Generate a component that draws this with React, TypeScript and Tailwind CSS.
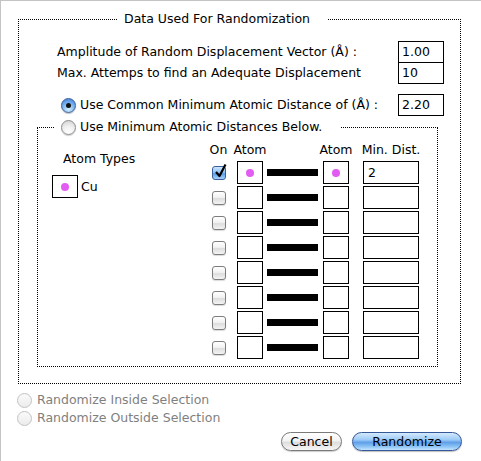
import * as React from "react"

function Radio({ checked, disabled }: { checked?: boolean; disabled?: boolean }) {
    if (checked) {
        return (
            <span className="flex h-[15px] w-[15px] shrink-0 items-center justify-center rounded-full border border-[#3b5f98] bg-[radial-gradient(circle_at_50%_80%,#d6efff_0%,#79b4f0_50%,#3a78d4_100%)] shadow-[0_1px_1px_rgba(0,0,0,0.25)]">
                <span className="h-[5px] w-[5px] rounded-full bg-[#111]" />
            </span>
        )
    }
    if (disabled) {
        return (
            <span className="h-[15px] w-[15px] shrink-0 rounded-full border border-[#c2c2c2] bg-linear-to-b from-[#fafafa] to-[#ececec]" />
        )
    }
    return (
        <span className="h-[15px] w-[15px] shrink-0 rounded-full border border-[#8c8c8c] bg-[radial-gradient(circle_at_50%_85%,#ffffff_0%,#f0f0f0_45%,#cfcfcf_100%)] shadow-[0_1px_1px_rgba(0,0,0,0.2)]" />
    )
}

function Checkbox({ checked }: { checked?: boolean }) {
    if (checked) {
        return (
            <span className="relative block h-[14px] w-[14px] rounded-[3px] border border-[#3b5f98] bg-[linear-gradient(to_bottom,#cfe6fd_0%,#86bdf2_50%,#5a9be6_55%,#a6d2fa_100%)]">
                <svg className="absolute -top-[4px] left-[1px]" width="13" height="16" viewBox="0 0 13 16">
                    <path d="M2 9 L5.5 13 L11.5 1.5" fill="none" stroke="#000" strokeWidth="2.2" strokeLinejoin="round" />
                </svg>
            </span>
        )
    }
    return (
        <span className="block h-[14px] w-[14px] rounded-[3px] border border-[#7d7d7d] bg-[linear-gradient(to_bottom,#ffffff_0%,#f2f2f2_45%,#dddddd_55%,#f4f4f4_100%)] shadow-[0_1px_1px_rgba(0,0,0,0.15)]" />
    )
}

function Dot() {
    return <span className="h-[8px] w-[8px] rounded-full bg-[#e25cf1]" />
}

const rows = [0, 1, 2, 3, 4, 5, 6, 7]

export default function App() {
    return (
        <div className="h-[461px] w-[481px] overflow-hidden border-l border-t border-[#c4c4c4] bg-white font-['DejaVu_Sans',sans-serif] text-[12.5px] leading-[16px] text-black">
            {/* Data box */}
            <fieldset className="ml-[17px] mt-[10px] w-[443px] border border-dotted border-black">
                <legend className="ml-[99px] pl-[6px] pr-[18px] leading-[16px]">Data Used For Randomization</legend>
                <div className="pb-[16px] pl-[18px] pr-[16px] pt-[14px]">
                    <div className="ml-[20px] flex h-[22px] items-center">
                        <span className="flex-1">Amplitude of Random Displacement Vector (Å) :</span>
                        <div className="h-[22px] w-[46px] border border-black px-[3px] leading-[20px]">1.00</div>
                    </div>
                    <div className="-mt-px ml-[20px] flex h-[22px] items-center">
                        <span className="flex-1">Max. Attemps to find an Adequate Displacement</span>
                        <div className="h-[22px] w-[46px] border border-black px-[3px] leading-[20px]">10</div>
                    </div>
                    <div className="ml-[20px] mt-[10px] flex h-[22px] items-center">
                        <span className="ml-[4px] flex flex-1 items-center gap-[4px]">
                            <Radio checked />
                            Use Common Minimum Atomic Distance of (Å) :
                        </span>
                        <div className="h-[22px] w-[46px] border border-black px-[3px] leading-[20px]">2.20</div>
                    </div>

                    {/* Per-pair distances */}
                    <fieldset className="mt-[3px] w-[401px] border border-dotted border-black">
                        <legend className="ml-[17px] pl-[6px] pr-[18px] leading-[16px]">
                            <span className="flex items-center gap-[4px]">
                                <Radio />
                                Use Minimum Atomic Distances Below.
                            </span>
                        </legend>
                        <div className="flex pb-[7px]">
                            <div className="w-[169px] pl-[14px]">
                                <div className="ml-[11px] mt-[16px]">Atom Types</div>
                                <div className="mt-[8px] flex items-center gap-[3px]">
                                    <div className="flex h-[23px] w-[26px] items-center justify-center border border-black">
                                        <Dot />
                                    </div>
                                    <span>Cu</span>
                                </div>
                            </div>
                            <div className="flex flex-col gap-[2px] pt-[7px]">
                                <div className="flex h-[17px] whitespace-nowrap">
                                    <span className="flex w-[23px] justify-center">On</span>
                                    <span className="ml-[7px] flex w-[26px] justify-center">Atom</span>
                                    <span className="ml-[4px] w-[51px]" />
                                    <span className="ml-[5px] flex w-[26px] justify-center">Atom</span>
                                    <span className="ml-[14px] flex w-[56px] justify-center">Min. Dist.</span>
                                </div>
                                {rows.map((i) => (
                                    <div key={i} className="flex h-[23px] items-center">
                                        <div className="flex w-[23px] justify-center">
                                            <Checkbox checked={i === 0} />
                                        </div>
                                        <div className="ml-[7px] flex h-[23px] w-[26px] items-center justify-center border border-black">
                                            {i === 0 && <Dot />}
                                        </div>
                                        <div className="ml-[4px] h-[7px] w-[51px] bg-black" />
                                        <div className="ml-[5px] flex h-[23px] w-[26px] items-center justify-center border border-black">
                                            {i === 0 && <Dot />}
                                        </div>
                                        <div className="ml-[14px] h-[23px] w-[56px] border border-black px-[4px] leading-[21px]">
                                            {i === 0 ? "2" : ""}
                                        </div>
                                    </div>
                                ))}
                            </div>
                        </div>
                    </fieldset>
                </div>
            </fieldset>

            {/* Selection scope */}
            <div className="ml-[16px] mt-[7px] text-[#7f7f7f]">
                <div className="flex h-[18px] items-center gap-[5px]">
                    <Radio disabled />
                    Randomize Inside Selection
                </div>
                <div className="flex h-[18px] items-center gap-[5px]">
                    <Radio disabled />
                    Randomize Outside Selection
                </div>
            </div>

            {/* Buttons */}
            <div className="mr-[19px] mt-[5px] flex justify-end gap-[10px]">
                <button className="h-[19px] w-[61px] rounded-full border border-[#7a7a7a] bg-[linear-gradient(to_bottom,#ffffff_0%,#f3f3f3_45%,#dedede_55%,#f6f6f6_100%)] text-[12.5px] leading-[17px] text-black shadow-[0_1px_1px_rgba(0,0,0,0.2)]">
                    Cancel
                </button>
                <button className="h-[19px] w-[110px] rounded-full border border-[#34589a] bg-[linear-gradient(to_bottom,#d4e9fd_0%,#9ccbf7_40%,#5f9fe8_55%,#8cc4f6_80%,#c4e4fe_100%)] text-[12.5px] leading-[17px] text-black shadow-[0_1px_1px_rgba(0,0,0,0.25)]">
                    Randomize
                </button>
            </div>
        </div>
    )
}
